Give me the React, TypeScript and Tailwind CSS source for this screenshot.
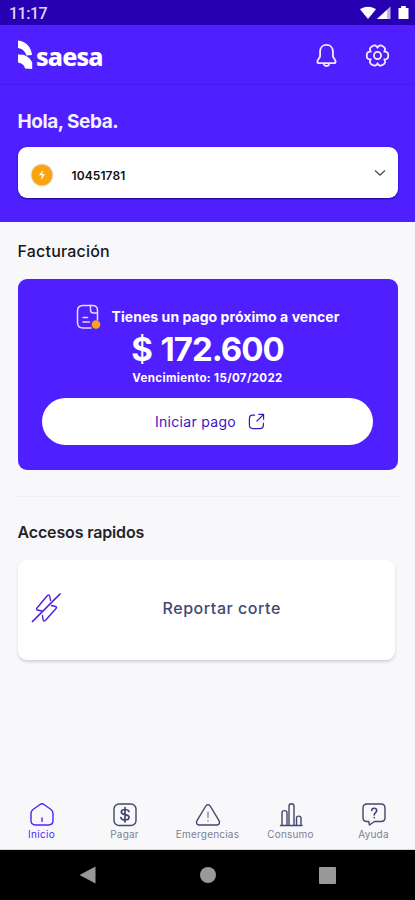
import type { ReactNode } from "react";

function StatusBar() {
  return (
    <div className="flex h-[25px] items-center justify-between bg-[#2800b3] pl-[9px] pr-[6px] text-white">
      <span className="pt-[3px] font-['Roboto',sans-serif] text-[16px] leading-none font-medium tracking-[-0.5px] text-[#dcd5fa]">11:17</span>
      <svg width="50" height="16" viewBox="0 0 50 16" fill="currentColor" className="mt-px">
        <path d="M1 4.3C5 .8 13 .8 17 4.3L9 14z" />
        <path d="M31.500 1.500V14H18z" opacity=".7" />
        <path d="M28 5V14H18z" />
        <path d="M39.500 3h2.700V1h4.600v2h2.700v11h-10z" />
      </svg>
    </div>
  );
}

function Logo() {
  return (
    <div className="flex items-center text-white">
      <svg width="16" height="30" viewBox="0 0 16 30" fill="currentColor">
        <path d="M1 .5C9 1.500 14 6.500 15 15L9.500 15.500C8 11 5 8.500 1 8z" />
        <path d="M1 14.500L6.500 14.800C11 16.500 14 19.500 15.200 22.500V29L8 28.500C7.500 25 5 23 1 22.500z" />
      </svg>
      <span className="ml-[3px] pt-px font-['Noto_Sans',sans-serif] text-[25px] leading-[30px] font-extrabold tracking-[-0.9px]">saesa</span>
    </div>
  );
}

function TopBar() {
  return (
    <div className="flex h-[60px] items-center justify-between border-b border-[#4919f2] pl-[17px] pr-[25px] pt-px">
      <Logo />
      <div className="flex items-center gap-[27px] text-[#f1edff]">
        <svg width="23" height="25" viewBox="0 0 24 26" fill="none" stroke="currentColor" strokeWidth="1.900" strokeLinejoin="round">
          <path d="M12 2C8 2 5.300 5 5.300 9v4.500c0 2-2.800 3.500-2.800 6 0 1 .8 1.500 1.800 1.500h15.400c1 0 1.800-.5 1.800-1.500 0-2.500-2.800-4-2.800-6V9C18.700 5 16 2 12 2z" />
          <path d="M9 22c1 2.600 5 2.600 6 0" />
        </svg>
        <svg width="25" height="25" viewBox="0 0 26 26" fill="none" stroke="currentColor" strokeWidth="1.900" strokeLinejoin="round">
          <path d="M20 9Q24.200 8.600 24.200 13Q24.200 17.400 20 17Q22.400 20.500 18.600 22.700Q14.800 24.900 13 21.100Q11.200 24.900 7.400 22.700Q3.600 20.500 6 17Q1.800 17.400 1.800 13Q1.800 8.600 6 9Q3.600 5.500 7.400 3.300Q11.200 1.100 13 4.900Q14.800 1.100 18.600 3.300Q22.400 5.500 20 9z" />
          <circle cx="13" cy="13" r="3.700" />
        </svg>
      </div>
    </div>
  );
}

function AccountSelect() {
  return (
    <button className="mt-[14px] flex h-[51px] w-full items-center rounded-[9px] bg-white pl-[12px] pr-[12px] shadow-[0_1px_2px_#25009c]">
      <svg width="24" height="24" viewBox="0 0 24 24" className="mt-[5px]">
        <circle cx="12" cy="12" r="11.500" fill="#e5e5ea" />
        <circle cx="12" cy="12" r="10.500" fill="#fca311" />
        <path d="M12.500 8L9.500 12h3l-1.200 4 3.300-4.500h-3z" fill="white" stroke="white" strokeWidth=".6" />
      </svg>
      <span className="ml-[18px] pt-[6px] text-[12px] font-semibold tracking-[0.1px] text-[#111]">10451781</span>
      <svg width="12" height="8" viewBox="0 0 12 8" className="ml-auto" fill="none" stroke="#555" strokeWidth="1.400">
        <path d="M1 1.500l5 4.500 5-4.500" />
      </svg>
    </button>
  );
}

function PaymentCard() {
  return (
    <section className="mt-[17px] flex h-[191px] flex-col items-center rounded-[9px] bg-[#4f1fff] px-[24px] pt-[25px] text-white">
      <div className="flex h-[26px] items-center gap-[11px]">
        <svg width="25" height="26" viewBox="0 0 25 26" fill="none" stroke="#e4dcff" strokeWidth="1.500" strokeLinecap="round" strokeLinejoin="round">
          <path d="M15 24H7c-4 0-5.500-1.500-5.500-5.500V7C1.500 3 3 1.500 7 1.500h9.500c3.500 0 5 1.500 5 5V16" />
          <path d="M14.500 1.500V6c0 2 1 3 3 3h4M7 13.500h4.500M7 18h6.500" />
          <circle cx="20" cy="20.500" r="4.300" fill="#fca311" stroke="none" />
        </svg>
        <span className="text-[14px] leading-[24px] font-bold tracking-[0.05px] whitespace-nowrap">Tienes un pago próximo a vencer</span>
      </div>
      <p className="mt-px text-[33px] leading-[36px] font-bold tracking-[-1px] [word-spacing:2px]">$ 172.600</p>
      <p className="mt-[3px] text-[11.5px] leading-[16px] font-bold tracking-[0.36px]">Vencimiento: 15/07/2022</p>
      <button className="mt-[12px] flex h-[47px] w-[331px] shrink-0 items-center justify-center gap-[12px] rounded-full bg-white pl-[5px] text-[#3c14c4]">
        <span className="text-[14px] tracking-[0.3px]">Iniciar pago</span>
        <svg width="17" height="17" viewBox="0 0 18 18" fill="none" stroke="currentColor" strokeWidth="1.300" strokeLinecap="round" strokeLinejoin="round">
          <path d="M7 2.300H5C2.500 2.300 1.500 3.500 1.500 6v6.500C1.500 15.500 2.500 16.500 5 16.500h7.500c2.800 0 3.800-1 3.800-3.800V11M11.500 1.500h5v5M16 2L9.500 8.500" />
        </svg>
      </button>
    </section>
  );
}

function QuickAccess() {
  return (
    <button className="mt-[17px] flex h-[100px] w-[377px] items-center rounded-[9px] bg-white pl-[13px] shadow-[0_2px_3px_#cfd3dc]">
      <svg width="31" height="31" viewBox="0 0 31 31" className="mb-[3px]" fill="none" stroke="#4f1fd8" strokeWidth="1.400" strokeLinecap="round" strokeLinejoin="round">
        <path d="M1.500 28.500L29 1" strokeWidth="1.700" />
        <path d="M11 18L6.500 17Q4.800 16.500 6 15L16 3Q18.500 .5 18.800 3.500L19.500 7.500M20.500 12.500L24.500 13.500Q26.200 14 25 15.500L14.800 27Q12.300 29.500 12 26.500L11.500 22.500" />
      </svg>
      <span className="ml-[101px] pb-[4px] text-[16px] font-medium tracking-[0.55px] text-[#454875]">Reportar corte</span>
    </button>
  );
}

function NavItem({ label, active, children }: { label: string; active?: boolean; children: ReactNode }) {
  return (
    <a className={active ? "flex flex-1 flex-col items-center text-[#4f1fff]" : "flex flex-1 flex-col items-center text-[#44476b]"}>
      <svg width="26" height="26" viewBox="0 0 26 26" fill="none" stroke="currentColor" strokeWidth="1.400" strokeLinecap="round" strokeLinejoin="round">
        {children}
      </svg>
      <span className={active ? "text-[10px] leading-[12px] tracking-[0.3px]" : "text-[10px] leading-[12px] tracking-[0.2px] text-[#7e8093]"}>{label}</span>
    </a>
  );
}

function BottomNav() {
  return (
    <nav className="mt-auto flex h-[48px] border-b border-[#d5d5d9]">
      <NavItem label="Inicio" active>
        <path d="M11 2.500c1.400-1 2.600-1 4 0l7 5c1.500 1.200 2 2.200 2 4v7c0 3-1.500 4.500-4.500 4.500h-13C3.500 23 2 21.500 2 18.500v-7c0-1.800.5-2.800 2-4z" />
        <path d="M13 16v3.500" />
      </NavItem>
      <NavItem label="Pagar">
        <rect x="2" y="2" width="22" height="21.500" rx="5" />
        <path d="M17 9.500C16.500 8 15 7.500 13 7.500c-2 0-3.700.8-3.700 2.500 0 3.800 7.700 1.500 7.700 5.300 0 1.700-1.500 2.700-4 2.700-2.300 0-3.700-.8-4.200-2.500M13 5.500v14.500" strokeWidth="1.700" />
      </NavItem>
      <NavItem label="Emergencias">
        <path d="M10.800 4c1-1.700 3.400-1.700 4.400 0L24 18.700c1.200 2 .2 4.300-2 4.300H4c-2.200 0-3.200-2.300-2-4.300z" />
        <path d="M13 10v5.500M13 18.500v.5" opacity=".6" />
      </NavItem>
      <NavItem label="Consumo">
        <path d="M2.500 23.500h21.500M4 23V10.500c0-2.500 5-2.500 5 0V23M11 23V4c0-3 5-3 5 0v19M18.500 23v-7c0-2.500 4.500-2.500 4.500 0v7" />
      </NavItem>
      <NavItem label="Ayuda">
        <path d="M6 2h14c2.700 0 4 1.300 4 4v9.500c0 2.700-1.300 4-4 4h-6.500L8.500 23l-.8-3.500H6c-2.700 0-4-1.300-4-4V6c0-2.700 1.300-4 4-4z" />
        <path d="M10.700 8.500c0-3 5-3 5 0 0 2.200-2.500 2-2.500 4.500M13.200 15.500v.3" strokeWidth="1.600" />
      </NavItem>
    </nav>
  );
}

function SystemBar() {
  return (
    <div className="flex h-[50px] items-center justify-between bg-black px-[79px] text-[#999]">
      <svg width="17" height="18" viewBox="0 0 17 18" fill="currentColor">
        <path d="M16.500.5v17L.5 9z" />
      </svg>
      <div className="size-[16px] rounded-full bg-[#999]" />
      <div className="size-[17px] rounded-[1px] bg-[#999]" />
    </div>
  );
}

export default function App() {
  return (
    <div className="flex h-[900px] w-[415px] flex-col overflow-hidden bg-[#f8f8fb] font-['Inter',sans-serif]">
      <StatusBar />
      <header className="h-[197px] bg-[#4f1fff]">
        <TopBar />
        <div className="px-[17.5px] pt-[26px]">
          <h1 className="text-[19px] leading-[22px] font-bold tracking-[-0.45px] text-[#f4f1ff]">Hola, Seba.</h1>
          <AccountSelect />
        </div>
      </header>
      <main className="px-[17.5px] pt-[18px]">
        <h2 className="text-[16px] leading-[22px] font-medium tracking-[0.2px] text-[#17171c]">Facturación</h2>
        <PaymentCard />
        <hr className="mt-[26px] border-[#eeeef1]" />
        <h2 className="mt-[24px] text-[16px] leading-[22px] font-semibold tracking-[-0.15px] text-[#24242a]">Accesos rapidos</h2>
        <QuickAccess />
      </main>
      <BottomNav />
      <SystemBar />
    </div>
  );
}
